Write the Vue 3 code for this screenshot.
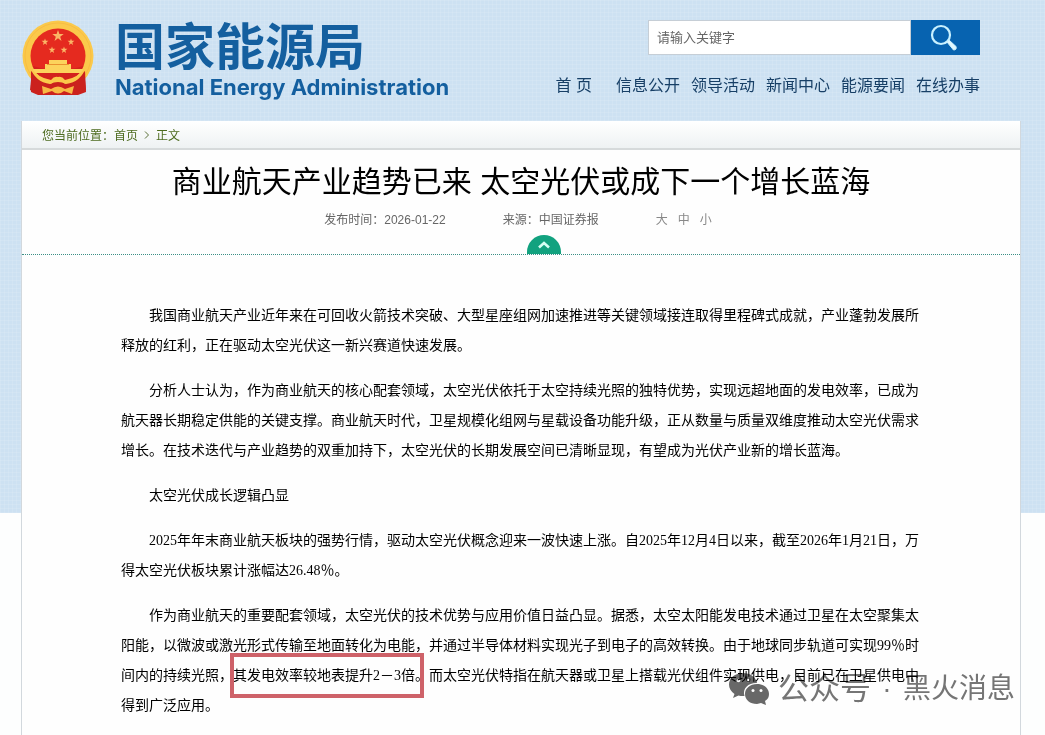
<template>
    <div class="layout">
        <header class="header">
            <a class="brand" href="#">
                <svg class="brand__emblem" viewBox="0 0 72 78" aria-hidden="true">
                    <path d="M10 50 L8 70 L15 74 L57 74 L64 70 L62 50 Z" fill="#c8211d" />
                    <circle cx="36" cy="36" r="35.5" fill="#fbc94b" />
                    <circle cx="36" cy="36" r="33" fill="none" stroke="#f8bd42" stroke-width="1" />
                    <circle cx="36" cy="36" r="27.5" fill="#e52a1f" />
                    <path d="M11 46 Q36 54 61 46 L59 52 Q50 61 36 61 Q22 61 13 52 Z" fill="#d3221d" />
                    <path d="M27 40 h18 v4 h4 v5 h12 v4 H11 v-4 h12 v-5 h4 Z" fill="#fcd35c" />
                    <path d="M25 44.5 h22" stroke="#e9932f" stroke-width="1" />
                    <path d="M9 51 Q14 55 20 58 L29 64 L33 59 H39 L43 64 L52 58 Q58 55 63 51 L64 72 L56 75 H16 L9 72 Z" fill="#cb211d" />
                    <path d="M8 47 Q16 58 29 60 Q32 56 36 57 Q40 56 43 60 Q56 58 64 47 Q59 62 44 64 Q36 60 28 64 Q13 62 8 47 Z" fill="#fbc94b" />
                    <path d="M20 66 L29 69 Q36 64 43 69 L52 66 L50 74 L42 71 Q36 76 30 71 L21 74 Z" fill="#f8b944" />
                    <path v-for="star in stars" :key="star.id" :d="starPath" :transform="star.transform" fill="#fbb566" />
                </svg>
                <span class="brand__text">
                    <span class="brand__name">国家能源局</span>
                    <span class="brand__sub">National Energy Administration</span>
                </span>
            </a>
            <div class="header__side">
                <form class="search" @submit.prevent>
                    <input v-model="keyword" class="search__input" type="text" placeholder="请输入关键字" aria-label="请输入关键字" />
                    <button class="search__button" type="submit" aria-label="搜索">
                        <svg width="28" height="28" viewBox="0 0 28 28" aria-hidden="true">
                            <circle cx="11" cy="11" r="9" fill="none" stroke="#c9f1ff" stroke-width="2.2" />
                            <path d="M17 18 L19 16 L26 22.5 Q27 26 23.5 26 Z" fill="#e2f8ff" stroke="#c9f1ff" />
                        </svg>
                    </button>
                </form>
                <nav class="nav">
                    <a v-for="item in navItems" :key="item" href="#">{{ item }}</a>
                </nav>
            </div>
        </header>

        <main class="page">
            <div class="crumbs">
                您当前位置：<a href="#">首页</a>
                <svg width="6" height="8" viewBox="0 0 6 8" aria-hidden="true">
                    <path d="M1 0.5 L4.5 4 L1 7.5" fill="none" stroke="#5b7038" />
                </svg>
                <a href="#">正文</a>
            </div>

            <div class="heading">
                <h1>商业航天产业趋势已来 太空光伏或成下一个增长蓝海</h1>
                <div class="meta">
                    <span>发布时间：2026-01-22</span>
                    <span>来源：中国证券报</span>
                    <div class="meta__sizes">
                        <button v-for="size in sizes" :key="size" type="button">{{ size }}</button>
                    </div>
                </div>
                <button class="heading__toggle" type="button" aria-label="收起">
                    <svg width="14" height="9" viewBox="0 0 14 9" aria-hidden="true">
                        <path d="M2 7.5 L7 3 L12 7.5" fill="none" stroke="#d5fff3" stroke-width="2.6" />
                    </svg>
                </button>
            </div>

            <article class="article">
                <p>我国商业航天产业近年来在可回收火箭技术突破、大型星座组网加速推进等关键领域接连取得里程碑式成就，产业蓬勃发展所释放的红利，正在驱动太空光伏这一新兴赛道快速发展。</p>
                <p>分析人士认为，作为商业航天的核心配套领域，太空光伏依托于太空持续光照的独特优势，实现远超地面的发电效率，已成为航天器长期稳定供能的关键支撑。商业航天时代，卫星规模化组网与星载设备功能升级，正从数量与质量双维度推动太空光伏需求增长。在技术迭代与产业趋势的双重加持下，太空光伏的长期发展空间已清晰显现，有望成为光伏产业新的增长蓝海。</p>
                <p>太空光伏成长逻辑凸显</p>
                <p>2025年年末商业航天板块的强势行情，驱动太空光伏概念迎来一波快速上涨。自2025年12月4日以来，截至2026年1月21日，万得太空光伏板块累计涨幅达26.48％。</p>
                <p>作为商业航天的重要配套领域，太空光伏的技术优势与应用价值日益凸显。据悉，太空太阳能发电技术通过卫星在太空聚集太阳能，以微波或激光形式传输至地面转化为电能，并通过半导体材料实现光子到电子的高效转换。由于地球同步轨道可实现99％时间内的持续光照，<span class="marked">其发电效率较地表提升2－3倍</span>。而太空光伏特指在航天器或卫星上搭载光伏组件实现供电，目前已在卫星供电中得到广泛应用。</p>
            </article>

            <div class="watermark">
                <svg width="42" height="34" viewBox="0 0 42 34" aria-hidden="true">
                    <path d="M15 1 C7 1 1 6 1 12.5 C1 16.5 3 19.5 6.5 22 L5 26 L10.5 23.5 C12.5 24 14 24.3 16.5 24 C14 16 21 10.5 29 11 C28 5 22 1 15 1 Z" fill="#686868" />
                    <path d="M29 12 C22 12 17 16.5 17 22 C17 28 22 32 29 32 L33 31 L38 33 L37 29 C40 27 41 25 41 22 C41 16.5 36 12 29 12 Z" fill="#686868" />
                    <g fill="#fff">
                        <circle cx="10.5" cy="8.5" r="1.8" />
                        <circle cx="20" cy="8.5" r="1.8" />
                        <circle cx="25" cy="18.5" r="1.5" />
                        <circle cx="33" cy="18.5" r="1.5" />
                    </g>
                </svg>
                <span class="watermark__type">公众号</span>
                <span class="watermark__dot">·</span>
                <span>黑火消息</span>
            </div>
        </main>
    </div>
</template>

<script setup>
import { ref } from 'vue';

const keyword = ref('');

const navItems = ['首 页', '信息公开', '领导活动', '新闻中心', '能源要闻', '在线办事'];
const sizes = ['大', '中', '小'];

const starPath = 'M0 -6 L1.4 -1.9 L5.7 -1.9 L2.2 0.7 L3.5 4.9 L0 2.3 L-3.5 4.9 L-2.2 0.7 L-5.7 -1.9 L-1.4 -1.9 Z';
const stars = [
    { id: 1, transform: 'translate(36 16)' },
    { id: 2, transform: 'translate(23 22) scale(0.6)' },
    { id: 3, transform: 'translate(49 22) scale(0.6)' },
    { id: 4, transform: 'translate(30 30) scale(0.6)' },
    { id: 5, transform: 'translate(42 30) scale(0.6)' },
];
</script>

<style>
body {
    margin: 0;
    background: #fdfefe;
}
</style>

<style scoped>
.layout {
    display: flex;
    flex-direction: column;
    min-height: 100vh;
    font-family: "Liberation Sans", "Noto Sans CJK SC", sans-serif;
    text-spacing-trim: space-all;
    background-image:
        repeating-linear-gradient(0deg, rgba(255, 255, 255, 0.1) 0 1px, transparent 1px 4px),
        repeating-linear-gradient(90deg, rgba(255, 255, 255, 0.1) 0 1px, transparent 1px 4px),
        linear-gradient(#cde1f2, #cde1f2);
    background-size: 100% 513px;
    background-repeat: no-repeat;
}

a {
    color: inherit;
    text-decoration: none;
}

button {
    border: 0;
    padding: 0;
    font: inherit;
    color: inherit;
    background: none;
    cursor: pointer;
}

.header {
    display: flex;
    justify-content: space-between;
    align-items: flex-start;
    box-sizing: border-box;
    height: 121px;
    padding: 20px 65px 0 22px;
}

.brand {
    display: flex;
    gap: 21px;
    color: #145f9f;
}

.brand__emblem {
    width: 72px;
    height: 78px;
}

.brand__text {
    display: flex;
    flex-direction: column;
    white-space: nowrap;
}

.brand__name {
    font-size: 50px;
    font-weight: bold;
    line-height: 56px;
}

.brand__sub {
    font-family: Inter, sans-serif;
    font-size: 22px;
    font-weight: bold;
    line-height: 22px;
}

.search {
    display: flex;
    justify-content: flex-end;
}

.search__input {
    box-sizing: border-box;
    width: 263px;
    height: 35px;
    border: 1px solid #c6ced6;
    padding: 0 8px;
    font-family: "Liberation Sans", "Noto Sans CJK SC", sans-serif;
    font-size: 13px;
    background: #fff;
}

.search__input::placeholder {
    color: #666;
}

.search__button {
    display: flex;
    align-items: center;
    justify-content: center;
    width: 69px;
    height: 35px;
    padding-right: 4px;
    background: #0763b0;
}

.nav {
    display: flex;
    gap: 11px;
    margin-top: 19px;
    font-size: 16px;
    line-height: 24px;
    white-space: nowrap;
    color: #173f66;
}

.nav a:first-child {
    margin-right: 13px;
}

.page {
    position: relative;
    flex: 1;
    margin: 0 24px 0 21px;
    border: 1px solid #d2d8dd;
    border-width: 0 1px;
    background: #fefefe;
}

.crumbs {
    display: flex;
    align-items: center;
    height: 27px;
    padding-left: 20px;
    border-bottom: 2px solid #d6dadb;
    font-size: 12px;
    color: #4d6b1f;
    background: linear-gradient(#fff, #eef2f3);
}

.crumbs svg {
    margin: 0 6px;
}

.heading {
    position: relative;
    padding: 12px 0 24px;
    border-bottom: 1px dotted #3c8f86;
    text-align: center;
}

h1 {
    margin: 0;
    font-size: 30px;
    font-weight: normal;
    line-height: 40px;
    color: #000;
}

.meta {
    display: flex;
    justify-content: center;
    gap: 57px;
    margin-top: 8px;
    padding-right: 6px;
    font-size: 12px;
    line-height: 20px;
    color: #666;
}

.meta__sizes {
    display: flex;
    gap: 10px;
    color: #888;
}

.heading__toggle {
    position: absolute;
    bottom: 0;
    left: 50%;
    width: 34px;
    height: 19px;
    margin-left: 6px;
    border-radius: 17px 17px 0 0;
    line-height: 0;
    background: #12a27f;
}

.article {
    padding: 46px 99px 14px;
    font-family: "Liberation Serif", "Noto Sans CJK SC", sans-serif;
    font-size: 14px;
    line-height: 30px;
    color: #000;
}

.article p {
    margin: 0 0 15px;
    text-indent: 2em;
}

.article p:last-child {
    margin-bottom: 0;
}

.marked {
    position: relative;
}

.marked::after {
    content: "";
    position: absolute;
    inset: -15px -9px -15px -3px;
    border: 4px solid #ce6269;
    pointer-events: none;
}

.watermark {
    position: absolute;
    right: 5px;
    bottom: 26px;
    display: flex;
    align-items: center;
    font-size: 28px;
    line-height: 40px;
    white-space: nowrap;
    color: #757575;
    mix-blend-mode: multiply;
    pointer-events: none;
}

.watermark__type {
    margin-left: 8px;
    font-size: 31px;
}

.watermark__dot {
    width: 32px;
    text-align: center;
}
</style>
